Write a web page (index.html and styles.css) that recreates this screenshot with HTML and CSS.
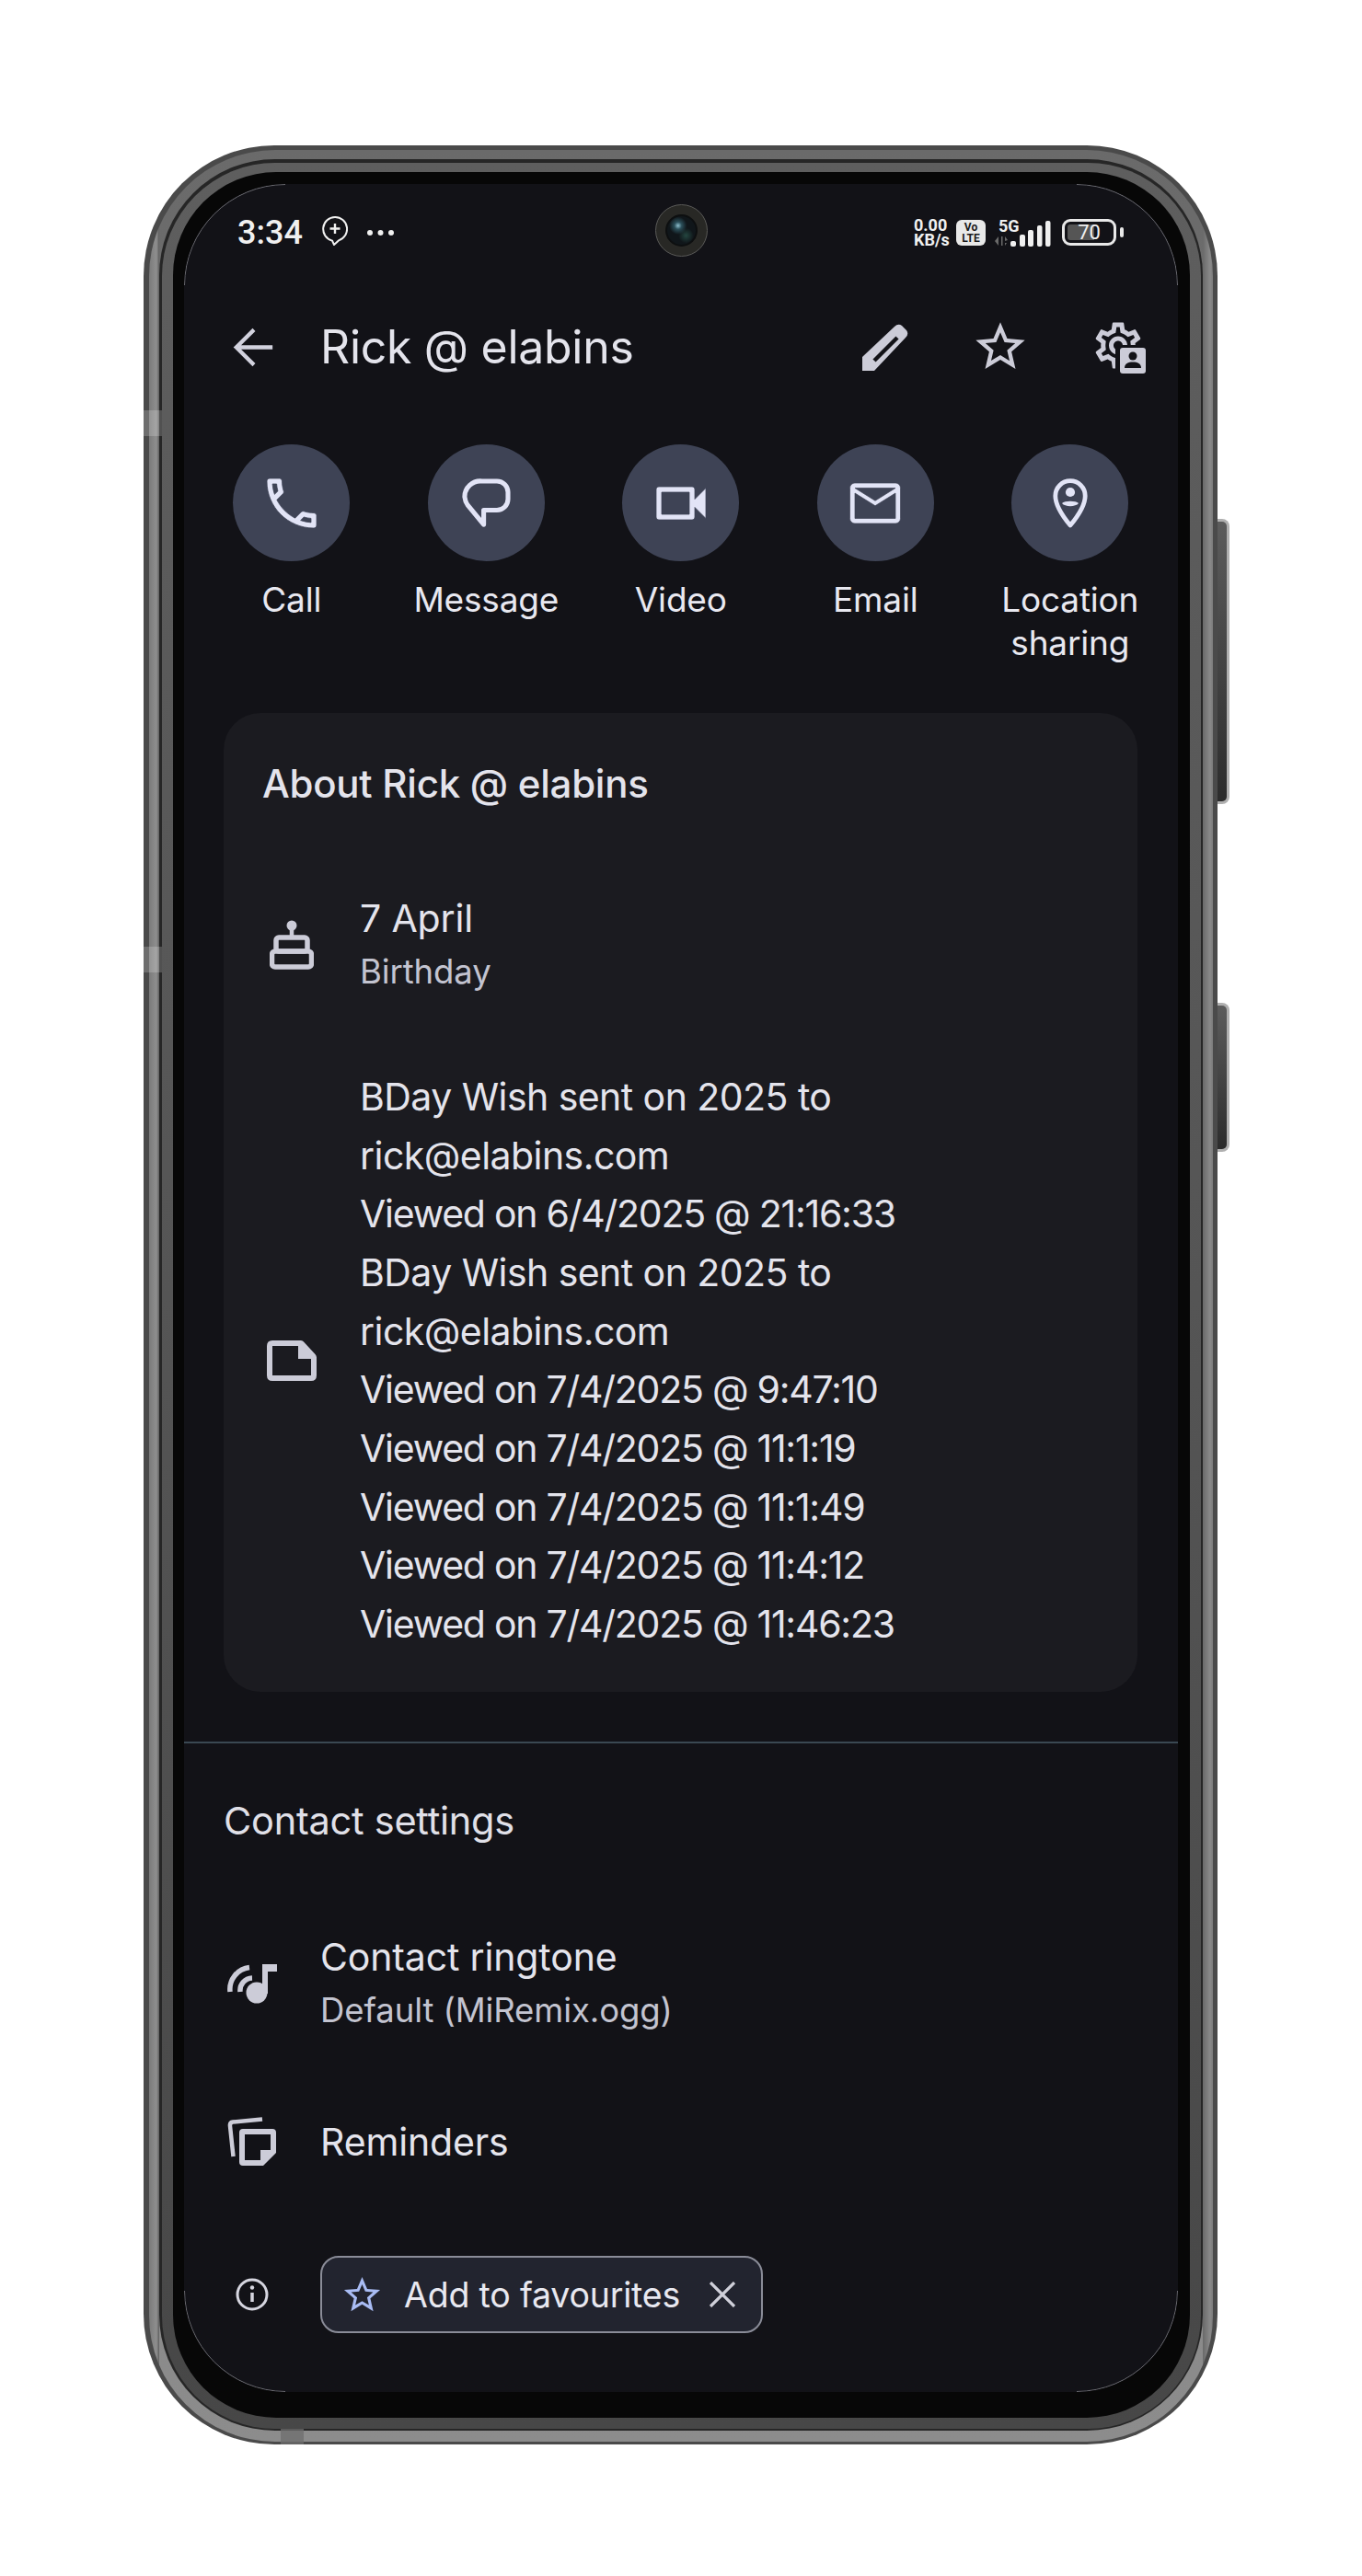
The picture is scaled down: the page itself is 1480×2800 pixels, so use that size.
FILE: index.html
```html
<!DOCTYPE html>
<html lang="en">
<head>
<meta charset="utf-8">
<title>Rick @ elabins</title>
<link rel="stylesheet" href="styles.css">
</head>
<body>
<div class="page">
<div class="phone">
  <span class="side-btn side-btn-a"></span>
  <span class="side-btn side-btn-b"></span>
  <span class="band band-a"></span>
  <span class="band band-b"></span>
  <span class="band band-c"></span>
  <span class="top-line"></span>
  <div class="ring-light"><div class="ring-dark"><div class="ring-grey"><div class="ring-black">
    <main class="screen">
      <svg class="hairline" viewBox="0 0 1080 2400" width="1080" height="2400" fill="none" stroke="#6a6a70" stroke-width="1">
        <path d="M.5 110A110 110 0 0 1 110 .5"/>
        <path d="M970 .5A110 110 0 0 1 1079.5 110"/>
        <path d="M.5 2290A110 110 0 0 0 110 2399.5"/>
        <path d="M970 2399.5A110 110 0 0 0 1079.5 2290"/>
      </svg>
      <div class="camera"><div class="lens"></div></div>

      <header class="status">
        <span class="time">3:34</span>
        <svg class="st-chat" width="28" height="32" viewBox="0 0 28 32" fill="none" stroke="#f0f0f0" stroke-width="2"><path d="M14 1a13 13 0 0 1 4 25.4L13 31l-2-4.400A13 13 0 0 1 14 1z"/><path d="M14 8v11M8.500 13.500h11" stroke-width="2.400"/></svg>
        <svg class="st-dots" width="29" height="6" viewBox="0 0 29 6" fill="#f0f0f0"><circle cx="3" cy="3" r="3"/><circle cx="14.500" cy="3" r="3"/><circle cx="26" cy="3" r="3"/></svg>
        <div class="st-right">
          <div class="speed"><span>0.00</span><span>KB/s</span></div>
          <div class="volte"><span>Vo</span><span>LTE</span></div>
          <div class="signal">
            <span class="five-g">5G</span>
            <svg width="62" height="30" viewBox="0 0 62 30">
              <path d="M5 19v10l-4-5zM8 19h1.500v10H8zM12 19l3 4-3 1zM12 29v-3h2z" fill="#6a6a6a"/>
              <g fill="#f0f0f0"><rect x="18" y="24" width="6" height="6" rx="2"/><rect x="28" y="17" width="6" height="13" rx="2"/><rect x="37" y="12" width="6" height="18" rx="2"/><rect x="47" y="7" width="5.500" height="23" rx="2"/><rect x="56" y="2" width="5.500" height="28" rx="2"/></g>
            </svg>
          </div>
          <div class="battery"><span>70</span></div>
          <span class="battery-tip"></span>
        </div>
      </header>

      <div class="appbar">
        <svg class="i-back" width="65" height="65" viewBox="0 0 24 24" fill="#d2d2de"><path d="M20 11.200H7.400l5.700-5.700L12 4.300 4.300 12l7.700 7.700 1.100-1.200-5.700-5.700H20z"/></svg>
        <h1 class="title">Rick @ elabins</h1>
        <div class="appbar-actions">
          <svg width="50" height="51" viewBox="0 0 50 51"><path d="M0 51V36L35 3q4-4 8-1l5 5q3 4-1 8L13 51z" fill="#ccccd8"/><path d="M13 40L38 15" stroke="#121217" stroke-width="4.500" fill="none"/></svg>
          <svg width="64" height="64" viewBox="0 0 24 24" fill="#ccccd8"><path d="M22 9.240l-7.190-.62L12 2 9.190 8.630 2 9.240l5.460 4.730L5.820 21 12 17.270 18.180 21l-1.630-7.030L22 9.240zM12 15.400l-3.760 2.270 1-4.280-3.320-2.880 4.380-.38L12 6.100l1.710 4.040 4.380.38-3.320 2.880 1 4.280L12 15.400z"/></svg>
          <svg width="58" height="58" viewBox="0 0 58 58" fill="#ccccd8">
            <path transform="translate(-2 -2.500) scale(2.500)" d="M19.430 12.980c.04-.32.07-.64.07-.98 0-.34-.03-.66-.07-.98l2.110-1.650c.19-.15.24-.42.12-.64l-2-3.460c-.09-.16-.26-.25-.44-.25-.06 0-.12.01-.17.03l-2.490 1c-.52-.4-1.080-.73-1.690-.98l-.38-2.650C14.460 2.180 14.250 2 14 2h-4c-.25 0-.46.18-.49.42l-.38 2.650c-.61.25-1.170.59-1.690.98l-2.490-1c-.06-.02-.12-.03-.18-.03-.17 0-.34.09-.43.25l-2 3.460c-.13.22-.07.49.12.64l2.110 1.650c-.04.32-.07.65-.07.98 0 .33.03.66.07.98l-2.110 1.650c-.19.15-.24.42-.12.64l2 3.460c.09.16.26.25.44.25.06 0 .12-.01.17-.03l2.490-1c.52.4 1.080.73 1.690.98l.38 2.650c.03.24.24.42.49.42h4c.25 0 .46-.18.49-.42l.38-2.650c.61-.25 1.170-.59 1.690-.98l2.490 1c.06.02.12.03.18.03.17 0 .34-.09.43-.25l2-3.460c.12-.22.07-.49-.12-.64l-2.110-1.650zm-1.980-1.710c.04.31.05.52.05.73 0 .21-.02.43-.05.73l-.14 1.130.89.7 1.080.84-.7 1.210-1.270-.51-1.040-.42-.9.68c-.43.32-.84.56-1.250.73l-1.060.43-.16 1.130-.2 1.350h-1.400l-.19-1.350-.16-1.130-1.060-.43c-.43-.18-.83-.41-1.230-.71l-.91-.7-1.060.43-1.270.51-.7-1.210 1.080-.84.89-.7-.14-1.130c-.03-.31-.05-.54-.05-.74s.02-.43.05-.73l.14-1.130-.89-.7-1.080-.84.7-1.210 1.270.51 1.040.42.9-.68c.43-.32.84-.56 1.250-.73l1.060-.43.16-1.130.2-1.350h1.390l.19 1.350.16 1.130 1.060.43c.43.18.83.41 1.230.71l.91.7 1.060-.43 1.270-.51.7 1.210-1.070.85-.89.7.14 1.130zM12 8c-2.210 0-4 1.790-4 4s1.790 4 4 4 4-1.790 4-4-1.790-4-4-4zm0 6c-1.100 0-2-.9-2-2s.9-2 2-2 2 .9 2 2-.9 2-2 2z"/>
            <rect x="25" y="27" width="33" height="31" fill="#121217"/>
            <rect x="30" y="30" width="28" height="28" rx="3"/>
            <circle cx="44" cy="39" r="4.500" fill="#121217"/><path d="M35 52c0-5 4-6.500 9-6.500s9 1.500 9 6.500z" fill="#121217"/>
          </svg>
        </div>
      </div>

      <nav class="actions">
        <div class="action"><div class="action-circle"><svg class="thin" width="72" height="72" viewBox="0 0 24 24" fill="#e2e4f6"><path d="M6.540 5c.06.89.21 1.760.45 2.590l-1.200 1.200c-.41-1.200-.67-2.470-.76-3.790h1.510m9.860 12.020c.85.24 1.720.39 2.600.45v1.490c-1.320-.09-2.590-.35-3.800-.75l1.200-1.190M7.500 3H4c-.55 0-1 .45-1 1 0 9.390 7.610 17 17 17 .55 0 1-.45 1-1v-3.490c0-.55-.45-1-1-1-1.240 0-2.450-.2-3.570-.57-.1-.04-.21-.05-.31-.05-.26 0-.51.1-.71.29l-2.200 2.200c-2.830-1.450-5.150-3.760-6.590-6.590l2.200-2.200c.28-.28.36-.67.25-1.020C8.700 6.450 8.500 5.250 8.500 4c0-.55-.45-1-1-1z"/></svg></div><span class="action-label">Call</span></div>
        <div class="action"><div class="action-circle"><svg width="72" height="72" viewBox="0 0 24 24" fill="none" stroke="#e2e4f6" stroke-width="1.700" stroke-linejoin="round"><path d="M10.500 4H16a4 4 0 0 1 4 4v2.500a4 4 0 0 1-4 4h-4.800v5.200L5.500 12.800A6 6 0 0 1 4.300 9.700 5.700 5.700 0 0 1 10.500 4z"/></svg></div><span class="action-label">Message</span></div>
        <div class="action"><div class="action-circle"><svg class="thin" width="72" height="72" viewBox="0 0 24 24" fill="#e2e4f6"><path d="M15 8v8H5V8h10m1-2H4c-.55 0-1 .45-1 1v10c0 .55.45 1 1 1h12c.55 0 1-.45 1-1v-3.500l4 4v-11l-4 4V7c0-.55-.45-1-1-1z"/></svg></div><span class="action-label">Video</span></div>
        <div class="action"><div class="action-circle"><svg class="thin" width="66" height="66" viewBox="0 0 24 24" fill="#e2e4f6"><path d="M20 4H4c-1.100 0-1.990.9-1.990 2L2 18c0 1.100.9 2 2 2h16c1.100 0 2-.9 2-2V6c0-1.100-.9-2-2-2zm0 14H4V8l8 5 8-5v10zm-8-7L4 6h16l-8 5z"/></svg></div><span class="action-label">Email</span></div>
        <div class="action"><div class="action-circle"><svg width="72" height="72" viewBox="0 0 24 24" fill="none" stroke="#e2e4f6" stroke-width="1.600" stroke-linejoin="round"><path d="M12 3.900a5.400 5.400 0 0 0-5.400 5.400c0 3.100 2.500 7.200 5.400 10.700 2.900-3.500 5.400-7.600 5.400-10.700A5.400 5.400 0 0 0 12 3.900z"/><circle cx="12" cy="8" r="1.700" fill="#e2e4f6" stroke="none"/><path d="M9 12c1-1 5-1 6 0-1 1.400-5 1.400-6 0z" fill="#e2e4f6" stroke="none"/></svg></div><span class="action-label">Location<br>sharing</span></div>
      </nav>

      <section class="card">
        <h2 class="card-title">About Rick @ elabins</h2>
        <div class="card-row birthday">
          <svg class="card-icon" width="48" height="54" viewBox="0 0 48 54" fill="none" stroke="#ccccd8" stroke-width="5.500" stroke-linejoin="round">
            <circle cx="24" cy="6" r="5.500" fill="#ccccd8" stroke="none"/><path d="M24 8v9" stroke-width="4.500"/>
            <rect x="7" y="19" width="34" height="15" rx="3"/><rect x="2.500" y="34" width="43" height="17" rx="3.500"/>
          </svg>
          <div>
            <div class="primary">7 April</div>
            <div class="secondary">Birthday</div>
          </div>
        </div>
        <div class="card-row notes">
          <svg class="card-icon" width="54" height="44" viewBox="0 0 54 44" fill="#ccccd8">
            <path d="M6 0h31q2 0 3 1.500L52.500 15q1.500 1.500 1.500 3.500V38q0 6-6 6H6q-6 0-6-6V6q0-6 6-6zm0 6v32h42V20H34V6z" fill-rule="evenodd"/>
          </svg>
          <div class="note-text">BDay Wish sent on 2025 to<br>rick@elabins.com<br><span class="viewed">Viewed on 6/4/2025 @ 21:16:33</span><br>BDay Wish sent on 2025 to<br>rick@elabins.com<br><span class="viewed">Viewed on 7/4/2025 @ 9:47:10</span><br><span class="viewed">Viewed on 7/4/2025 @ 11:1:19</span><br><span class="viewed">Viewed on 7/4/2025 @ 11:1:49</span><br><span class="viewed">Viewed on 7/4/2025 @ 11:4:12</span><br><span class="viewed">Viewed on 7/4/2025 @ 11:46:23</span></div>
        </div>
      </section>

      <hr class="divider">

      <h2 class="section-title">Contact settings</h2>

      <div class="setting ringtone">
        <svg class="setting-icon" width="54" height="43" viewBox="0 0 54 43" fill="#ccccd8">
          <path d="M3 30A24 24 0 0 1 24 3.500M14 30A13.500 13.500 0 0 1 27 15" fill="none" stroke="#ccccd8" stroke-width="5.500"/>
          <circle cx="32" cy="31" r="11.500"/><path d="M38 0h16v8H44v24h-6z"/>
        </svg>
        <div>
          <div class="primary">Contact ringtone</div>
          <div class="secondary">Default (MiRemix.ogg)</div>
        </div>
      </div>

      <div class="setting reminders">
        <svg class="setting-icon" width="54" height="54" viewBox="0 0 54 54" fill="#ccccd8">
          <path d="M6.500 43L3 10q-.5-4 3-4.500L38 2.500" fill="none" stroke="#ccccd8" stroke-width="4.500"/>
          <path d="M17 13h32q4 0 4 4v22L39 53H17q-4 0-4-4V17q0-4 4-4zm2 6v28h17V36h11V19z" fill-rule="evenodd"/>
        </svg>
        <div class="primary">Reminders</div>
      </div>

      <div class="setting favourite">
        <svg class="setting-icon" width="54" height="36" viewBox="0 0 54 36" fill="none" stroke="#d6d6e0" stroke-width="3"><circle cx="27" cy="18" r="16"/><path d="M27 16v10" stroke-width="3.500"/><circle cx="27" cy="10.500" r="2.200" fill="#d6d6e0" stroke="none"/></svg>
        <div class="chip">
          <svg class="chip-star" width="47" height="47" viewBox="0 0 24 24" fill="#a9bcf4"><path d="M22 9.240l-7.190-.62L12 2 9.190 8.630 2 9.240l5.460 4.730L5.820 21 12 17.270 18.180 21l-1.630-7.030L22 9.240zM12 15.400l-3.760 2.270 1-4.280-3.320-2.880 4.380-.38L12 6.100l1.710 4.040 4.380.38-3.320 2.880 1 4.280L12 15.400z"/></svg>
          <span class="chip-label">Add to favourites</span>
          <svg class="chip-close" width="30" height="28" viewBox="0 0 30 28" fill="none" stroke="#d0d0da" stroke-width="3.200"><path d="M2 1l26 26M28 1L2 27"/></svg>
        </div>
      </div>
    </main>
  </div></div></div></div>
</div>
</div>
</body>
</html>
```
FILE: styles.css
```css
* { box-sizing: border-box; }
html, body { margin: 0; background: #fff; }
body { font-family: "Inter", "Roboto", sans-serif; color: #e4e4ec; }
h1, h2 { margin: 0; font-weight: 400; }

.page { width: 1480px; height: 2800px; padding: 158px 0 0 156px; }

.phone {
  position: relative;
  width: 1167px; height: 2499px;
  padding: 5px 5px 3px 6px;
  border-radius: 142px;
  background: #4a4a4a;
}
.ring-light {
  height: 100%;
  padding: 10px 11px 12px 11px;
  border-radius: 137px;
  background:
    linear-gradient(90deg, #7a7a7a 0, #8f8f8f 8px, #5f5f5f 11px, transparent 11px, transparent calc(100% - 11px), #6a6a6a calc(100% - 11px), #8a8a8a calc(100% - 3px), #7a7a7a 100%),
    linear-gradient(180deg, #6a6a6a, #8c8c8c);
}
.ring-dark {
  height: 100%;
  padding: 4px 2px 2px 3px;
  border-radius: 126px;
  background: #262626;
}
.ring-grey {
  height: 100%;
  padding: 10px 12px 12px 12px;
  border-radius: 123px;
  background: linear-gradient(180deg, #5e5e5e, #555 50%, #474747);
}
.ring-black {
  height: 100%;
  padding: 13px 13px 28px 12px;
  border-radius: 112px;
  background: #070707;
}
.screen {
  position: relative;
  width: 1080px; height: 2400px;
  border-radius: 110px;
  background: #121217;
  overflow: hidden;
}
.hairline { position: absolute; inset: 0; }

.side-btn {
  position: absolute; left: 100%;
  width: 13px;
  border: 3px solid #b0b0b0; border-left: 0;
  border-radius: 0 8px 8px 0;
  background: linear-gradient(180deg, #5c5c5c, #2c2c2c);
}
.side-btn-a { top: 406px; height: 310px; }
.side-btn-b { top: 932px; height: 162px; }
.band { position: absolute; background: rgba(255,255,255,.2); }
.band-a { left: 0; top: 288px; width: 20px; height: 28px; }
.band-b { left: 0; top: 871px; width: 20px; height: 28px; }
.band-c { left: 149px; top: 2482px; width: 25px; height: 17px; background: rgba(110,110,110,.75); }
.top-line { position: absolute; left: 347px; top: 17px; width: 476px; height: 2px; background: #262626; }

.camera {
  position: absolute; left: 512px; top: 22px;
  width: 57px; height: 57px;
  display: flex; align-items: center; justify-content: center;
  border-radius: 50%;
  border: 1px solid #5a5a58;
  background: #282825;
}
.lens {
  width: 35px; height: 35px; border-radius: 50%;
  border: 2px solid #0d0f10;
  background:
    radial-gradient(circle at 38% 33%, #8fc0cf 0, #2b4f5a 14%, transparent 34%),
    radial-gradient(circle at 66% 68%, #244640 0, transparent 28%),
    #10161a;
}

/* status bar */
.status {
  height: 106px;
  display: flex; align-items: center;
  padding: 0 59px 0 58px;
  font-family: "Roboto", sans-serif;
  color: #f0f0f0;
}
.time { font-size: 36px; font-weight: 500; line-height: 42px; margin-right: 21px; }
.st-chat { margin-right: 21px; margin-top: -4px; }
.st-right { margin-left: auto; display: flex; align-items: center; height: 30px; margin-top: -1px; }
.speed {
  width: 39px; margin-right: 7px;
  display: flex; flex-direction: column;
  font-size: 18px; font-weight: 700; line-height: 16px;
}
.speed span { white-space: nowrap; }
.volte {
  width: 32px; height: 28px; margin-right: 9px;
  display: flex; flex-direction: column; align-items: center; justify-content: center;
  border-radius: 6px;
  background: #e8e8e8; color: #1a1a1a;
  font-size: 12px; font-weight: 700; line-height: 12px;
}
.signal { position: relative; width: 62px; height: 30px; margin-right: 12px; }
.signal svg { display: block; }
.five-g { position: absolute; left: 5px; top: 0; font-size: 18px; font-weight: 700; line-height: 15px; }
.battery {
  width: 59px; height: 29px; padding: 3px;
  display: flex; align-items: center; justify-content: center;
  border: 3px solid #e8e8e8; border-radius: 9px;
  background: linear-gradient(#555, #555) no-repeat;
  background-size: 62% 100%;
  background-origin: content-box;
  background-clip: content-box;
  font-size: 22px; font-weight: 400; line-height: 20px;
}
.battery-tip { width: 4px; height: 11px; margin-left: 4px; border-radius: 2px; background: #e8e8e8; }

/* app bar */
.appbar {
  height: 142px; margin-bottom: 35px;
  display: flex; align-items: center;
  padding: 0 35px 0 42px;
}
.i-back { flex: none; margin-right: 41px; }
.title { font-size: 50px; letter-spacing: -.3px; line-height: 60px; color: #e4e4ec; }
.appbar-actions { margin-left: auto; display: flex; align-items: center; gap: 68px; }
.appbar-actions svg { display: block; }

/* quick actions */
.actions {
  display: grid; grid-template-columns: repeat(5, 211.5px);
  padding: 0 11px;
  margin-bottom: 53px;
}
.action { display: flex; flex-direction: column; align-items: center; }
.action-circle {
  width: 127px; height: 127px; margin-bottom: 18px;
  display: flex; align-items: center; justify-content: center;
  border-radius: 50%;
  background: #3e4355;
}
.thin path { stroke: #3e4355; stroke-width: .25; }
.action-label { font-size: 37px; line-height: 47px; text-align: center; letter-spacing: -.2px; color: #e8e8f0; }

/* about card */
.card {
  margin: 0 44px 54px 43px;
  height: 1064px;
  padding: 52px 0 41px 42px;
  border-radius: 40px;
  background: #1b1b20;
}
.card-title { font-size: 42px; font-weight: 500; line-height: 50px; margin-bottom: 92px; letter-spacing: -.25px; color: #e4e4ec; }
.card-row { display: flex; align-items: center; }
.card-icon { flex: none; margin-left: 8px; margin-right: 50px; }
.birthday { margin-bottom: 76px; }
.notes .card-icon { margin-left: 5px; margin-right: 47px; }
.primary { font-size: 41px; line-height: 58px; letter-spacing: -.15px; color: #e4e4ec; }
.secondary { font-size: 36.5px; line-height: 58px; letter-spacing: -.1px; color: #c3c4d0; }
.note-text { font-size: 41px; line-height: 63.67px; letter-spacing: -.55px; color: #e4e4ec; }
.viewed { letter-spacing: -1.25px; }

.divider { margin: 0; height: 2px; border: 0; background: #3a4852; }

.section-title { margin: 59px 0 94px 43px; font-size: 41.5px; line-height: 50px; letter-spacing: -.25px; color: #e0e0e8; }

.setting { display: flex; align-items: center; padding-left: 47px; }
.setting-icon { flex: none; margin-right: 47px; }
.ringtone { margin-bottom: 85px; }
.reminders { margin-bottom: 95px; }

.chip {
  width: 481px; height: 84px;
  display: flex; align-items: center;
  padding: 0 27px 0 20px;
  border: 2px solid #8a8c98;
  border-radius: 20px;
  background: #22242f;
}
.chip-star { flex: none; margin-right: 22px; }
.chip-label { font-size: 37.5px; letter-spacing: -.2px; color: #e8e8f0; white-space: nowrap; }
.chip-close { flex: none; margin-left: auto; }
```
